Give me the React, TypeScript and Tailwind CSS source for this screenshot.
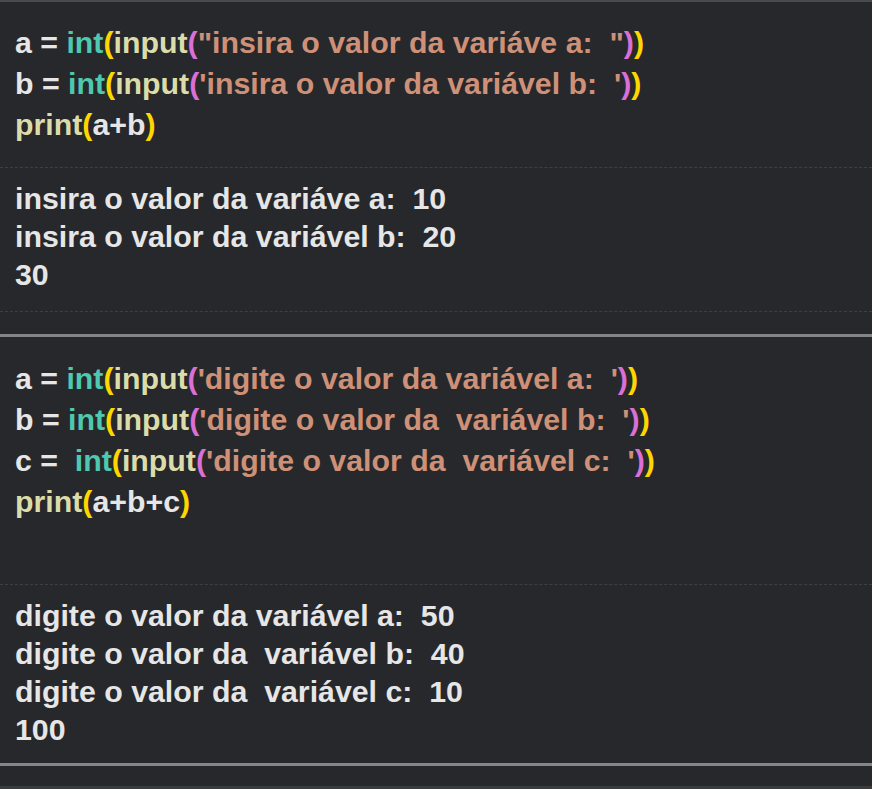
import React from 'react';

type Tok = { t: string; c: string };

const W = 'text-[#e6e6e6]';
const FN = 'text-[#dcdcaa]';
const BI = 'text-[#4ec9b0]';
const STR = 'text-[#ce9178]';
const P1 = 'text-[#ffd700]';
const P2 = 'text-[#da70d6]';

const inputLine = (lhs: string, prompt: string): Tok[] => [
  { t: lhs, c: W },
  { t: 'int', c: BI },
  { t: '(', c: P1 },
  { t: 'input', c: FN },
  { t: '(', c: P2 },
  { t: prompt, c: STR },
  { t: ')', c: P2 },
  { t: ')', c: P1 },
];

const printLine = (args: string): Tok[] => [
  { t: 'print', c: FN },
  { t: '(', c: P1 },
  { t: args, c: W },
  { t: ')', c: P1 },
];

const cells = [
  {
    code: [
      inputLine('a = ', '"insira o valor da variáve a:  "'),
      inputLine('b = ', "'insira o valor da variável b:  '"),
      printLine('a+b'),
    ],
    out: ['insira o valor da variáve a:  10', 'insira o valor da variável b:  20', '30'],
    extra: false,
  },
  {
    code: [
      inputLine('a = ', "'digite o valor da variável a:  '"),
      inputLine('b = ', "'digite o valor da  variável b:  '"),
      inputLine('c =  ', "'digite o valor da  variável c:  '"),
      printLine('a+b+c'),
    ],
    out: [
      'digite o valor da variável a:  50',
      'digite o valor da  variável b:  40',
      'digite o valor da  variável c:  10',
      '100',
    ],
    extra: true,
  },
];

export default function App() {
  return (
    <div
      className="w-[872px] h-[789px] overflow-hidden bg-[#27282b] border-t-2 border-[#4a4a4c] flex flex-col font-bold text-[30.3px] whitespace-pre"
      style={{ fontFamily: '"Liberation Sans", Arial, sans-serif' }}
    >
      {cells.map((cell, i) => (
        <div key={i} className="flex flex-col border-b-[3px] border-[#858585]">
          <div className={`pl-[15px] leading-[41px] ${cell.extra ? 'pt-[21px] pb-[62px]' : 'pt-[20px] pb-[22px]'}`}>
            {cell.code.map((line, j) => (
              <div key={j}>
                {line.map((tok, k) => (
                  <span key={k} className={tok.c}>{tok.t}</span>
                ))}
              </div>
            ))}
          </div>
          <div className="border-t border-dashed border-[#3b4043]" />
          <div className={`pl-[15px] pt-[12px] leading-[38px] ${W} ${cell.extra ? 'pb-[14px]' : 'pb-[17px]'}`}>
            {cell.out.map((line, j) => (
              <div key={j}>{line}</div>
            ))}
          </div>
          {!cell.extra && <div className="border-t border-dashed border-[#3b4043] mb-[22px]" />}
        </div>
      ))}
      <div className="flex-1" />
      <div className="h-[3px] bg-[#3a3b3d]" />
    </div>
  );
}
